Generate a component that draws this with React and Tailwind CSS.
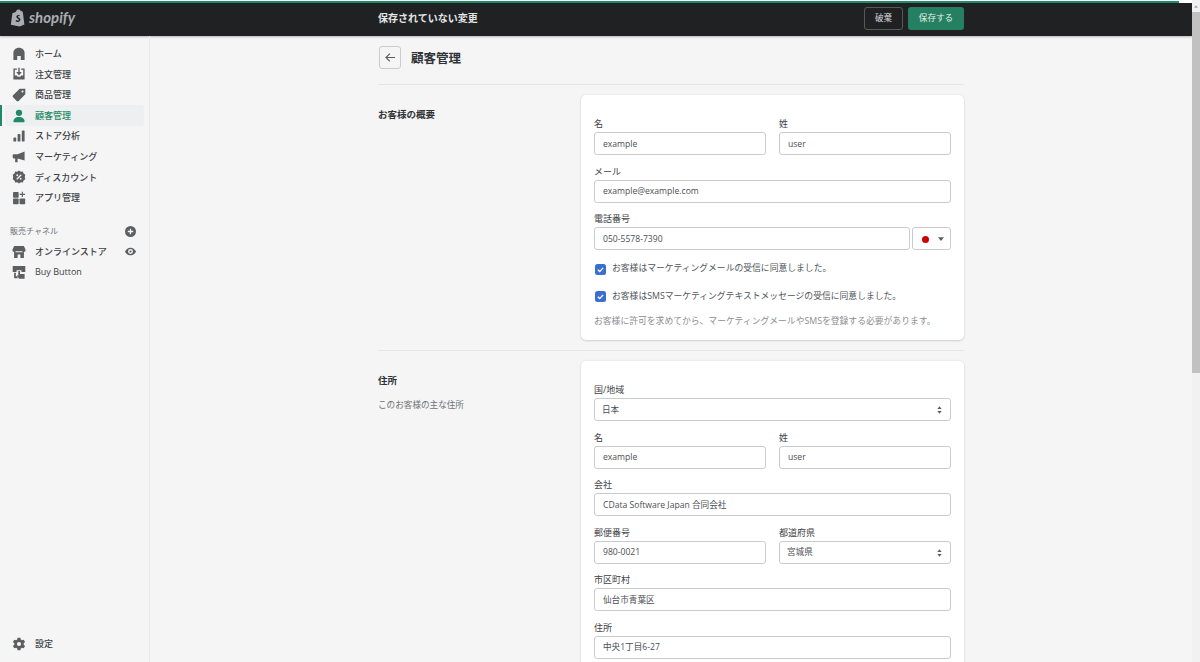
const font = { fontFamily: '"Open Sans", "Noto Sans CJK JP", sans-serif' };

function Icon({ children, active }) {
  return (
    <svg viewBox="0 0 20 20" className={`w-[14px] h-[14px] shrink-0 ${active ? 'text-[#1f8a65]' : 'text-[#5c5f62]'}`} fill="currentColor">
      {children}
    </svg>
  );
}

const icons = {
  home: <path d="M2 18.5V8.5C2 4 5.5 1 10 1s8 3 8 7.5v10h-5.5V13h-5v5.5z" />,
  orders: (
    <>
      <path fillRule="evenodd" d="M2 2h5v2H4v8h3l1 2h4l1-2h3V4h-3V2h5v16H2z" />
      <path d="M9 1h2v6h3l-4 5-4-5h3z" />
    </>
  ),
  products: <path fillRule="evenodd" d="M11 1h8v8L9.5 18.5a2 2 0 0 1-2.8 0l-5.2-5.2a2 2 0 0 1 0-2.8zm4 2.5a1.5 1.5 0 1 0 0 3 1.5 1.5 0 0 0 0-3z" />,
  customers: (
    <>
      <circle cx="10" cy="5.5" r="4.5" />
      <path d="M2 18c0-4 3-6.500 8-6.500s8 2.500 8 6.500c0 .6-.4 1-1 1H3c-.6 0-1-.4-1-1z" />
    </>
  ),
  analytics: (
    <>
      <rect x="2" y="12" width="4" height="6" rx="1" />
      <rect x="8" y="7" width="4" height="11" rx="1" />
      <rect x="14" y="2" width="4" height="16" rx="1" />
    </>
  ),
  marketing: <path d="M18 2v13L8 12v5.500H4.500V12H2.500A1.500 1.500 0 0 1 1 10.500v-3A1.500 1.500 0 0 1 2.500 6H8z" />,
  discount: (
    <>
      <path d="M10 .8l2.500 1.700 3-.2 1 2.800 2.500 1.700-.8 3.200.8 3.200-2.500 1.700-1 2.800-3-.2L10 19.200l-2.500-1.700-3 .2-1-2.800L1 13.200 1.800 10 1 6.800l2.500-1.700 1-2.800 3 .2z" />
      <path d="M12.600 6.200l1.200 1.200-6.400 6.400-1.200-1.200z" fill="#f5f5f5" />
      <circle cx="7.500" cy="7.500" r="1.300" fill="#f5f5f5" />
      <circle cx="12.500" cy="12.500" r="1.300" fill="#f5f5f5" />
    </>
  ),
  apps: (
    <>
      <rect x="1.500" y="1.500" width="8" height="8" rx="1" />
      <rect x="1.500" y="10.800" width="8" height="8" rx="1" />
      <rect x="10.800" y="10.800" width="8" height="8" rx="1" />
      <path d="M14 1h1.600v3h3v1.600h-3v3H14v-3h-3V4h3z" />
    </>
  ),
  store: <path fillRule="evenodd" d="M3 1.500h14l2.500 5.500a3 3 0 0 1-2.500 3V18.500h-5v-5H8v5H3V10A3 3 0 0 1 .5 7zm2 9h10V9H5z" />,
  buy: (
    <>
      <path d="M1 1.500h18v8.500h-5.500V7.500h-7V10H1z" />
      <path d="M3 11h2.500v5H8v3H3z" />
      <path d="M9 8.500h2.500V13H18v6.500h-8L7 14.500l2 .5z" />
    </>
  ),
  settings: (
    <path fillRule="evenodd" d="M8 1h4l.6 2.700 1.500.9 2.600-.8 2 3.400-2 1.900v1.800l2 1.900-2 3.400-2.600-.8-1.500.9L12 19H8l-.6-2.700-1.500-.9-2.600.8-2-3.400 2-1.900V9.100l-2-1.900 2-3.400 2.600.8 1.500-.9zm2 6a3 3 0 1 0 0 6 3 3 0 0 0 0-6z" />
  ),
};

function NavItem({ icon, label, active, right }) {
  return (
    <div className="relative h-[20.6px] flex items-center">
      {active && <div className="absolute left-0 top-0 bottom-0 w-[2px] bg-[#1f8a65]" />}
      <div className={`flex items-center gap-[9px] h-full w-full ml-[5px] mr-[5px] pl-[7px] pr-[8px] rounded-[3px] ${active ? 'bg-[#edeff1]' : ''}`}>
        <Icon active={active}>{icons[icon]}</Icon>
        <span className={`flex-1 text-[9px] font-medium ${active ? 'text-[#1f8a65]' : 'text-[#3c4146]'}`}>{label}</span>
        {right}
      </div>
    </div>
  );
}

function Sidebar() {
  return (
    <aside className="w-[150px] shrink-0 border-r border-[#ebebeb] flex flex-col pt-[7.500px] pb-[8px]">
      <NavItem icon="home" label="ホーム" />
      <NavItem icon="orders" label="注文管理" />
      <NavItem icon="products" label="商品管理" />
      <NavItem icon="customers" label="顧客管理" active />
      <NavItem icon="analytics" label="ストア分析" />
      <NavItem icon="marketing" label="マーケティング" />
      <NavItem icon="discount" label="ディスカウント" />
      <NavItem icon="apps" label="アプリ管理" />
      <div className="flex items-center justify-between pl-[10px] pr-[13px] mt-[14px] mb-[1px] h-[18px]">
        <span className="text-[8px] text-[#6d7175]">販売チャネル</span>
        <svg viewBox="0 0 20 20" className="w-[11px] h-[11px] text-[#5c5f62]" fill="currentColor">
          <path fillRule="evenodd" d="M10 0a10 10 0 1 1 0 20 10 10 0 0 1 0-20zM8.800 5v3.800H5v2.400h3.800V15h2.400v-3.800H15V8.800h-3.800V5z" />
        </svg>
      </div>
      <NavItem
        icon="store"
        label="オンラインストア"
        right={
          <svg viewBox="0 0 20 20" className="w-[11px] h-[11px] text-[#5c5f62]" fill="currentColor">
            <path fillRule="evenodd" d="M10 3c5 0 8.500 3.500 10 7-1.500 3.500-5 7-10 7S1.500 13.500 0 10c1.500-3.500 5-7 10-7zm0 2.500a4.500 4.500 0 1 0 0 9 4.500 4.500 0 0 0 0-9zM10 8a2 2 0 1 1 0 4 2 2 0 0 1 0-4z" />
          </svg>
        }
      />
      <NavItem icon="buy" label="Buy Button" />
      <div className="mt-auto">
        <NavItem icon="settings" label="設定" />
      </div>
    </aside>
  );
}

function Label({ children }) {
  return <div className="h-[15px] mb-[1px] pt-[1px] flex items-center text-[9px] text-[#3f4347]">{children}</div>;
}

function Box({ children, className = '' }) {
  return (
    <div className={`h-[23px] pt-[1px] bg-white border border-[#c9cccf] rounded-[3px] flex items-center text-[8.6px] text-[#4a4f54] ${className}`}>
      {children}
    </div>
  );
}

function Field({ label, value, className = '' }) {
  return (
    <div className={className}>
      <Label>{label}</Label>
      <Box className="px-[8px]">{value}</Box>
    </div>
  );
}

function Select({ label, value, className = '' }) {
  return (
    <div className={className}>
      <Label>{label}</Label>
      <Box className="pl-[7px] pr-[8px] justify-between">
        <span>{value}</span>
        <svg viewBox="0 0 8 12" className="w-[5px] h-[8px] text-[#5c5f62]" fill="currentColor">
          <path d="M4 0l3.500 4.500h-7zM4 12L.5 7.500h7z" />
        </svg>
      </Box>
    </div>
  );
}

function Check({ children }) {
  return (
    <div className="h-[14px] flex items-center gap-[6px] ml-[1px]">
      <div className="w-[11px] h-[11px] rounded-[2.5px] bg-[#3a6fd0] flex items-center justify-center">
        <svg viewBox="0 0 12 12" className="w-[9px] h-[9px]" fill="none" stroke="white" strokeWidth="1.800">
          <path d="M2.500 6.300l2.500 2.500 4.500-5" />
        </svg>
      </div>
      <span className="text-[8.8px] text-[#50555a]">{children}</span>
    </div>
  );
}

function Section({ title, sub, children }) {
  return (
    <section className="flex">
      <div className="w-[203px] shrink-0 pt-[12px]">
        <h2 className="h-[16px] flex items-center text-[9.500px] font-semibold text-[#2f3337]">{title}</h2>
        {sub && <p className="mt-[10px] text-[8.600px] text-[#6d7175]">{sub}</p>}
      </div>
      <div className="flex-1 bg-white rounded-[5px] shadow-[0_0_3px_rgba(23,24,24,0.08),0_1px_2px_rgba(0,0,0,0.12)] pt-[21px] px-[13px] pb-[11px] flex flex-col gap-[8.500px]">
        {children}
      </div>
    </section>
  );
}

export default function App() {
  return (
    <div className="w-[1200px] h-[662px] overflow-hidden flex bg-[#f5f5f5]" style={font}>
      <div className="flex-1 min-w-0 flex flex-col">
        <div className="h-[36px] shrink-0 flex flex-col bg-[#202123] shadow-[0_1px_2px_rgba(0,0,0,0.25)]">
          <div className="h-[3px] pt-[1px] bg-white">
            <div className="h-[2px] w-[1179px] bg-[#1f8a65]" />
          </div>
          <div className="flex-1 flex items-center pb-[3px]">
            <div className="w-[150px] shrink-0 pl-[10px] flex items-center gap-[3px]">
              <svg viewBox="0 0 20 22" className="w-[16px] h-[18px]" fill="#a9adb1">
                <path d="M3 5l4-1.500C8 1 9.500.5 11 .5c1 0 1.500.5 2 1.500l1.500.3L16 3.500 18 19l-6 2.500L1 19.500z" />
                <path d="M12 7.500c-3-1-4.500 1-4 2.500s3.500 2 3 3.500c-.5 1-2.500.7-3.500 0l-.5 2c2.500 1.300 6 .5 6-2.500 0-2.500-3.300-2.700-3-4 .2-.7 1.500-.6 2.500-.1z" fill="#202123" />
              </svg>
              <span className="text-[15px] font-bold italic text-[#a9adb1] mt-[-2px]" style={{ fontFamily: 'Lato, sans-serif' }}>shopify</span>
            </div>
            <div className="flex-1 min-w-0 px-[228px] flex items-center">
              <span className="flex-1 text-[10px] font-semibold text-[#e3e5e7]">保存されていない変更</span>
              <button className="w-[39px] h-[23px] border border-[#56595c] rounded-[3px] text-[8.600px] text-[#d5d7d9]">破棄</button>
              <button className="w-[56px] h-[23px] ml-[5px] bg-[#258062] rounded-[3px] text-[8.600px] text-[#e4efe9]">保存する</button>
            </div>
          </div>
        </div>
        <div className="flex-1 min-h-0 flex">
          <Sidebar />
          <main className="flex-1 min-w-0 px-[228px] pt-[10px]">
            <div className="flex items-center h-[23px] pl-[1px]">
              <button className="w-[22px] h-[23px] border border-[#c9cccf] rounded-[3px] flex items-center justify-center">
                <svg viewBox="0 0 20 20" className="w-[13px] h-[13px] text-[#5c5f62]" fill="none" stroke="currentColor" strokeWidth="1.800">
                  <path d="M17 10H3.500M9 4l-6 6 6 6" />
                </svg>
              </button>
              <h1 className="ml-[10px] mt-[4px] text-[12.500px] font-semibold text-[#2f3337]">顧客管理</h1>
            </div>
            <div className="h-px bg-[#e6e6e6] mt-[15px] mb-[10px]" />
            <Section title="お客様の概要">
              <div className="flex gap-[13px]">
                <Field className="flex-1" label="名" value="example" />
                <Field className="flex-1" label="姓" value="user" />
              </div>
              <Field label="メール" value="example@example.com" />
              <div>
                <Label>電話番号</Label>
                <div className="flex gap-[2px]">
                  <Box className="flex-1 px-[8px]">050-5578-7390</Box>
                  <Box className="w-[39px] pl-[9px] pr-[6px] justify-between">
                    <span className="w-[7px] h-[7px] rounded-full bg-[#cc0000]" />
                    <svg viewBox="0 0 8 5" className="w-[6px] h-[4px] text-[#5c5f62]" fill="currentColor">
                      <path d="M0 0h8L4 5z" />
                    </svg>
                  </Box>
                </div>
              </div>
              <div className="mt-[3.500px]">
                <Check>お客様はマーケティングメールの受信に同意しました。</Check>
              </div>
              <div className="mt-[5px]">
                <Check>お客様はSMSマーケティングテキストメッセージの受信に同意しました。</Check>
              </div>
              <p className="h-[14px] mt-[3px] flex items-center text-[8.800px] text-[#8a8e92]">お客様に許可を求めてから、マーケティングメールやSMSを登録する必要があります。</p>
            </Section>
            <div className="h-px bg-[#e6e6e6] my-[10px]" />
            <Section title="住所" sub="このお客様の主な住所">
              <Select label="国/地域" value="日本" />
              <div className="flex gap-[13px]">
                <Field className="flex-1" label="名" value="example" />
                <Field className="flex-1" label="姓" value="user" />
              </div>
              <Field label="会社" value="CData Software Japan 合同会社" />
              <div className="flex gap-[13px]">
                <Field className="flex-1" label="郵便番号" value="980-0021" />
                <Select className="flex-1" label="都道府県" value="宮城県" />
              </div>
              <Field label="市区町村" value="仙台市青葉区" />
              <Field label="住所" value="中央1丁目6-27" />
            </Section>
          </main>
        </div>
      </div>
      <div className="w-[8px] shrink-0 bg-[#f1f1f1] flex flex-col items-center pt-[5px]">
        <svg viewBox="0 0 6 4" className="w-[4px] h-[3px] text-[#a3a3a3]" fill="currentColor">
          <path d="M3 0l3 4H0z" />
        </svg>
        <div className="w-full h-[361px] mt-[4px] bg-[#c1c1c1]" />
      </div>
    </div>
  );
}
